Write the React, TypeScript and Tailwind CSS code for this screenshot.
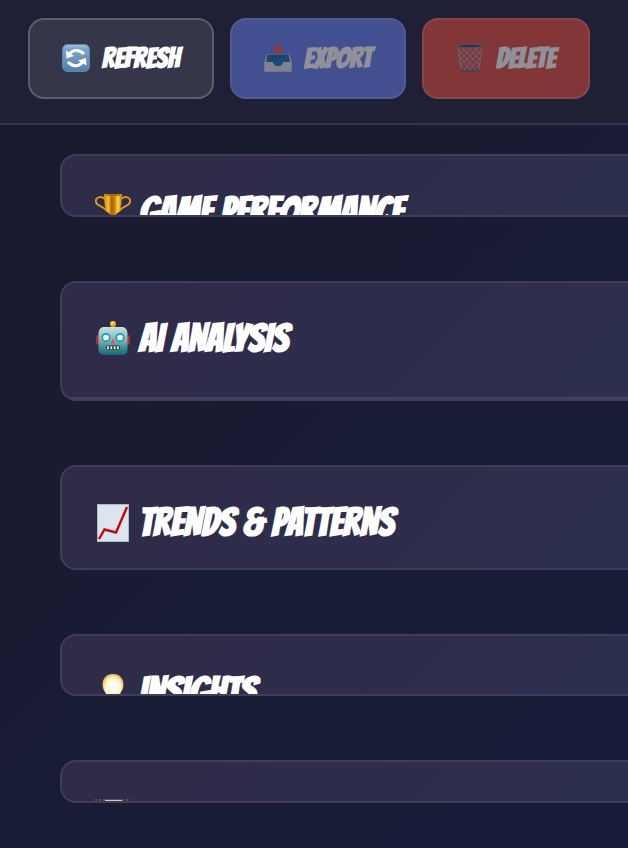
import type { ReactNode } from "react";

const displayFont = "font-['Bangers','Liberation_Sans_Narrow','Liberation_Sans',sans-serif]";

function RefreshIcon() {
  return (
    <svg viewBox="0 0 28 28" className="size-7 shrink-0" aria-hidden="true">
      <defs>
        <linearGradient id="rf" x1="0" y1="0" x2="0" y2="1">
          <stop offset="0" stopColor="#a9c6dc" />
          <stop offset="0.15" stopColor="#7da5c8" />
          <stop offset="1" stopColor="#547fa8" />
        </linearGradient>
      </defs>
      <rect x="0.5" y="0.5" width="27" height="27" rx="5" fill="url(#rf)" stroke="#5a86ad" />
      <g fill="none" stroke="#fff" strokeWidth="3">
        <path d="M7 11C10 5.500 17 5 22 10" />
        <path d="M21.500 16.500C18 23 11 23.500 6 18" />
      </g>
      <path d="M4 6.500L4.500 14.500L12 12Z" fill="#fff" />
      <path d="M24.500 21.500L24 14L16 16.500Z" fill="#fff" />
    </svg>
  );
}

function ExportIcon() {
  return (
    <svg viewBox="0 0 28 28" className="size-7 shrink-0" aria-hidden="true">
      <defs>
        <linearGradient id="tray" x1="0" y1="0" x2="0" y2="1">
          <stop offset="0" stopColor="#1b5f90" />
          <stop offset="1" stopColor="#1685cf" />
        </linearGradient>
      </defs>
      <path d="M3 10H25L27.500 18V27.500H0.500V18Z" fill="#e4e4e6" />
      <path d="M3.500 10.500H24.500L26 18H19.500C18 24 10 24 8.500 18H2Z" fill="url(#tray)" />
      <path d="M14 0L19.500 6H17V10H11V6H8.500Z" fill="#ff5058" />
      <path d="M0.500 18H8.500C10 24 18 24 19.500 18H27.500V27.500H0.500Z" fill="#e4e4e6" />
    </svg>
  );
}

function DeleteIcon() {
  return (
    <svg viewBox="0 0 28 28" className="size-7 shrink-0" aria-hidden="true">
      <g fill="none" stroke="#a3acb8" strokeWidth="0.9">
        <path d="M2 3L5 26M26 3L23 26M3 6L20 26M5 3L24 22M11 3L25 17M17 3L26 12M3 12L14 26M4 19L9 26" />
        <path d="M25 6L8 26M23 3L4 22M17 3L3 17M11 3L2 12M25 12L14 26M24 19L19 26" />
      </g>
      <ellipse cx="14" cy="2" rx="13" ry="1.500" fill="#343e4b" stroke="#798896" />
      <path d="M4.500 25C9 26.500 19 26.500 23.500 25V27C19 28 9 28 4.500 27Z" fill="#5c6c7e" />
    </svg>
  );
}

function TrophyIcon() {
  return (
    <svg viewBox="0 0 36 36" className="size-9 shrink-0" aria-hidden="true">
      <defs>
        <linearGradient id="cup">
          <stop offset="0" stopColor="#d88b05" />
          <stop offset="0.25" stopColor="#f5c02b" />
          <stop offset="0.42" stopColor="#a86000" />
          <stop offset="0.58" stopColor="#c47b00" />
          <stop offset="0.78" stopColor="#ffdb4b" />
          <stop offset="1" stopColor="#bd7300" />
        </linearGradient>
      </defs>
      <path d="M10 5C5 1 0 4 1 8C2 13 8 11 13 18M26 5C31 1 36 4 35 8C34 13 28 11 23 18" fill="none" stroke="#d99a16" strokeWidth="1.900" />
      <path d="M9 0H27C27 13 25 18 20 21V27H16V21C11 18 9 13 9 0Z" fill="url(#cup)" />
      <ellipse cx="18" cy="1" rx="9" ry="1" fill="#8c5200" stroke="#f0b52b" strokeWidth="0.500" />
      <path d="M11 28H25V35H11Z" fill="#694219" />
    </svg>
  );
}

function RobotIcon() {
  return (
    <svg viewBox="0 0 36 36" className="size-9 shrink-0" aria-hidden="true">
      <defs>
        <linearGradient id="face" x1="0" y1="0" x2="0" y2="1">
          <stop offset="0" stopColor="#c8e2df" />
          <stop offset="0.45" stopColor="#82b7b8" />
          <stop offset="0.8" stopColor="#318790" />
          <stop offset="1" stopColor="#176672" />
        </linearGradient>
        <radialGradient id="knob" cx="0.4" cy="0.300">
          <stop offset="0" stopColor="#fff46a" />
          <stop offset="1" stopColor="#f19a09" />
        </radialGradient>
      </defs>
      <rect x="1" y="14" width="4" height="10" rx="2" fill="#b72a2d" />
      <rect x="31" y="14" width="4" height="10" rx="2" fill="#b72a2d" />
      <path d="M14 8C14 4 22 4 22 8Z" fill="#655092" />
      <circle cx="18" cy="3" r="3" fill="url(#knob)" />
      <path d="M8 6H28Q32 7 32.500 12V29Q32 34 27 34H9Q4 34 3.500 29V12Q4 7 8 6Z" fill="url(#face)" />
      <g fill="#fff" stroke="#0c9fc0" strokeWidth="1.700">
        <circle cx="11" cy="16.500" r="3.700" />
        <circle cx="25" cy="16.500" r="3.700" />
      </g>
      <path d="M18 17L20.500 22.500H15.500Z" fill="#e15258" />
      <rect x="11" y="24.500" width="14" height="4" rx="1.500" fill="#2c3c42" />
      <path d="M13 25.200V28M16.300 25.200V28M19.700 25.200V28M23 25.200V28" stroke="#f5e7cf" strokeWidth="1.800" />
    </svg>
  );
}

function ChartIcon() {
  return (
    <svg viewBox="0 0 36 36" className="size-9 shrink-0 overflow-visible" aria-hidden="true">
      <rect x="2.500" y="-0.500" width="31" height="37" fill="#dbe5ed" stroke="#aebac6" />
      <path d="M4 34L9.500 24.500L21 27.500L32 2" fill="none" stroke="#c90711" strokeWidth="2.400" />
    </svg>
  );
}

function BulbIcon() {
  return (
    <svg viewBox="0 0 36 36" className="size-9 shrink-0" aria-hidden="true">
      <defs>
        <radialGradient id="bulb">
          <stop offset="0.3" stopColor="#fffdf3" />
          <stop offset="0.75" stopColor="#fff2c5" />
          <stop offset="1" stopColor="#e9bb52" />
        </radialGradient>
      </defs>
      <path d="M18 0C11 0 7.500 5 7.500 10.500C7.500 17 12 19 13 26H23C24 19 28.500 17 28.500 10.500C28.500 5 25 0 18 0Z" fill="url(#bulb)" />
      <path d="M14 27H22V34H14Z" fill="#9b9da5" />
    </svg>
  );
}

function FilmIcon() {
  return (
    <svg viewBox="0 0 36 36" className="size-9 shrink-0 overflow-visible" aria-hidden="true">
      <rect y="-1" width="36" height="37" fill="#55534f" />
      <path d="M10 0H27V36H10Z" fill="#c9c9c9" />
      <path d="M2 0H4M6 0H8M29 0H31M33 0H35" stroke="#333" strokeWidth="2" />
    </svg>
  );
}

type ActionProps = { icon: ReactNode; label: string; look: string; disabled?: boolean };

function Action({ icon, label, look, disabled }: ActionProps) {
  return (
    <button
      type="button"
      disabled={disabled}
      className={`flex h-[81px] shrink-0 items-center justify-center gap-3 rounded-2xl border-2 border-white/20 pb-0.5 text-[28px] font-bold text-white disabled:opacity-50 ${look}`}
    >
      {icon}
      <span>{label}</span>
    </button>
  );
}

type PanelProps = { icon: ReactNode; title?: string; height: string; children?: ReactNode };

function Panel({ icon, title, height, children }: PanelProps) {
  return (
    <section
      className={`flex flex-col justify-between overflow-hidden rounded-l-2xl border-2 border-r-0 border-[#3e3f54] bg-linear-135 from-[#2f2b48] to-[#2c2f4e] bg-origin-border ${height}`}
    >
      <h2 className="mt-8 ml-[33px] flex h-12 shrink-0 items-center gap-2 text-[39px] leading-12 font-bold whitespace-nowrap text-white">
        {icon}
        {title && <span>{title}</span>}
      </h2>
      {children}
    </section>
  );
}

export default function App() {
  return (
    <div className={`min-h-screen overflow-hidden bg-linear-135 from-[#1a1a2e] to-[#171d3a] ${displayFont}`}>
      <header className="flex gap-4 border-b-2 border-[#34354a] bg-[#1f2035] px-7 pt-[18px] pb-6">
        <Action icon={<RefreshIcon />} label="REFRESH" look="w-[186px] bg-white/10" />
        <Action icon={<ExportIcon />} label="EXPORT" look="w-[176px] bg-[#667eea]" disabled />
        <Action icon={<DeleteIcon />} label="DELETE" look="w-[168px] bg-[#e74c3c]" disabled />
      </header>
      <main className="flex flex-col gap-16 pt-[29px] pb-11 pl-[60px]">
        <Panel icon={<TrophyIcon />} title="GAME PERFORMANCE" height="h-[63px]" />
        <Panel icon={<RobotIcon />} title="AI ANALYSIS" height="h-[120px]">
          <div className="h-0.5 shrink-0 bg-white/10" />
        </Panel>
        <Panel icon={<ChartIcon />} title="TRENDS & PATTERNS" height="h-[105px]" />
        <Panel icon={<BulbIcon />} title="INSIGHTS" height="h-[62px]" />
        <Panel icon={<FilmIcon />} height="h-[43px]" />
      </main>
    </div>
  );
}
